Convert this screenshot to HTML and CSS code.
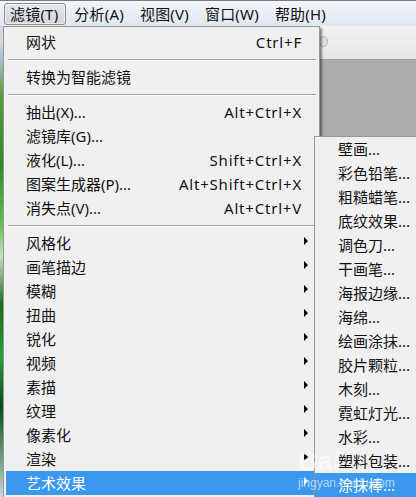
FILE: index.html
```html
<!DOCTYPE html>
<html lang="zh-CN">
<head>
<meta charset="utf-8">
<link rel="stylesheet" href="styles.css">
</head>
<body>
<div class="app">
  <div class="menubar">
    <span class="mb-item active">滤镜(T)</span>
    <span class="mb-item">分析(A)</span>
    <span class="mb-item">视图(V)</span>
    <span class="mb-item">窗口(W)</span>
    <span class="mb-item">帮助(H)</span>
  </div>
  <div class="workspace">
    <div class="photo-strip"></div>
    <div class="right-area">
      <div class="toolbar"><span class="tb-knob"></span></div>
      <div class="canvas"></div>
    </div>
  </div>

  <div class="menu main-menu">
    <div class="item"><span class="label">网状</span><span class="key">Ctrl+F</span></div>
    <div class="sep"></div>
    <div class="item"><span class="label">转换为智能滤镜</span></div>
    <div class="sep"></div>
    <div class="item"><span class="label">抽出(X)...</span><span class="key">Alt+Ctrl+X</span></div>
    <div class="item"><span class="label">滤镜库(G)...</span></div>
    <div class="item"><span class="label">液化(L)...</span><span class="key">Shift+Ctrl+X</span></div>
    <div class="item"><span class="label">图案生成器(P)...</span><span class="key">Alt+Shift+Ctrl+X</span></div>
    <div class="item"><span class="label">消失点(V)...</span><span class="key">Alt+Ctrl+V</span></div>
    <div class="sep"></div>
    <div class="item sub"><span class="label">风格化</span><span class="arrow"></span></div>
    <div class="item sub"><span class="label">画笔描边</span><span class="arrow"></span></div>
    <div class="item sub"><span class="label">模糊</span><span class="arrow"></span></div>
    <div class="item sub"><span class="label">扭曲</span><span class="arrow"></span></div>
    <div class="item sub"><span class="label">锐化</span><span class="arrow"></span></div>
    <div class="item sub"><span class="label">视频</span><span class="arrow"></span></div>
    <div class="item sub"><span class="label">素描</span><span class="arrow"></span></div>
    <div class="item sub"><span class="label">纹理</span><span class="arrow"></span></div>
    <div class="item sub"><span class="label">像素化</span><span class="arrow"></span></div>
    <div class="item sub"><span class="label">渲染</span><span class="arrow"></span></div>
    <div class="item sub hl"><span class="label">艺术效果</span><span class="arrow"></span></div>
  </div>

  <div class="menu sub-menu">
    <div class="item"><span class="label">壁画...</span></div>
    <div class="item"><span class="label">彩色铅笔...</span></div>
    <div class="item"><span class="label">粗糙蜡笔...</span></div>
    <div class="item"><span class="label">底纹效果...</span></div>
    <div class="item"><span class="label">调色刀...</span></div>
    <div class="item"><span class="label">干画笔...</span></div>
    <div class="item"><span class="label">海报边缘...</span></div>
    <div class="item"><span class="label">海绵...</span></div>
    <div class="item"><span class="label">绘画涂抹...</span></div>
    <div class="item"><span class="label">胶片颗粒...</span></div>
    <div class="item"><span class="label">木刻...</span></div>
    <div class="item"><span class="label">霓虹灯光...</span></div>
    <div class="item"><span class="label">水彩...</span></div>
    <div class="item"><span class="label">塑料包装...</span></div>
    <div class="item hl"><span class="label">涂抹棒...</span></div>
  </div>

  <div class="watermark">
    <span class="wm-big">Bai</span>
    <span class="wm-small">jingyan.baidu.com</span>
  </div>
</div>
</body>
</html>
```

FILE: styles.css
```css
* { box-sizing: border-box; }
html, body { margin: 0; padding: 0; }
body {
  font-family: "Noto Sans", "Noto Sans CJK SC", sans-serif;
  font-size: 15px;
  color: #111;
  background: #f0f0f0;
}
.app {
  position: relative;
  width: 416px;
  height: 497px;
  overflow: hidden;
  display: flex;
  flex-direction: column;
}
.menubar {
  height: 26px;
  flex: none;
  display: flex;
  align-items: center;
  padding: 0 0 0 4px;
  border-top: 1px solid #7a7a7a;
  background: linear-gradient(#f3f6fb, #dfe7f2);
}
.mb-item {
  height: 22px;
  line-height: 20px;
  padding: 0 7px 0 5px;
  border: 1px solid transparent;
  white-space: nowrap;
  margin-right: 2px;
  letter-spacing: 0.2px;
}
.mb-item.active {
  border-color: #8a8c8e;
  border-radius: 3px;
  background: linear-gradient(#e4e6e9, #d4d7db);
  box-shadow: inset 0 0 0 1px rgba(255,255,255,0.5);
}
.workspace {
  flex: 1;
  display: flex;
}
.photo-strip {
  width: 4px;
  flex: none;
  background: linear-gradient(#d8d8d8 0, #d8d8d8 14px, #a8c4d8 30px, #5a9a3a 70px, #2e8a2a 140px, #62c050 200px, #c8e0c0 230px, #1a6a1a 280px, #28a038 330px, #0c4a1c 380px, #6a9a7a 430px, #c8d4dc 470px);
}
.right-area {
  flex: 1;
  display: flex;
  flex-direction: column;
}
.toolbar {
  height: 34px;
  flex: none;
  background: linear-gradient(#f2f2f2, #e6e6e6);
  border-bottom: 1px solid #9a9a9a;
  position: relative;
}
.tb-knob {
  position: absolute;
  left: 315px;
  top: 10px;
  width: 9px;
  height: 11px;
  border-radius: 50%;
  border: 1px solid #b8b8b8;
  background: #e0e0e0;
}
.canvas {
  flex: 1;
  background: #ababab;
}

.menu {
  position: absolute;
  background: #f0f0f0;
  border: 1px solid #979797;
  font-family: "Noto Sans", "Noto Sans CJK SC", sans-serif;
  font-size: 15px;
}
.main-menu {
  left: 3px;
  top: 26px;
  width: 317px;
  height: 480px;
  padding: 3px 2px 0 2px;
  box-shadow: 2px 2px 2px rgba(0,0,0,0.45);
}
.sub-menu {
  left: 314px;
  top: 136px;
  width: 120px;
  height: 370px;
  padding: 0 2px 0 0;
  box-shadow: 2px 2px 2px rgba(0,0,0,0.35);
}
.item {
  height: 24px;
  display: flex;
  align-items: center;
  padding: 0 16px 0 20px;
  white-space: nowrap;
  line-height: 24px;
}
.sub-menu .item { padding-left: 23px; }
.label { flex: 1; }
.key { flex: none; letter-spacing: 0.8px; margin-right: -1px; }
.item.sub { padding-right: 9px; }
.arrow {
  width: 0;
  height: 0;
  border-top: 4px solid transparent;
  border-bottom: 4px solid transparent;
  border-left: 4px solid #000;
  margin-top: -4px;
}
.item.hl {
  background: #3a98ee;
  color: #fff;
}
.item.hl .arrow { border-left-color: #fff; }
.sep {
  height: 11px;
  margin: 0 1px 0 2px;
  position: relative;
}
.sep::before {
  content: "";
  position: absolute;
  left: 0; right: 0; top: 5px;
  border-top: 1px solid #a0a0a0;
  border-bottom: 1px solid #ffffff;
}
.watermark {
  position: absolute;
  left: 298px;
  top: 446px;
  display: flex;
  flex-direction: column;
  font-family: "Liberation Sans", sans-serif;
  pointer-events: none;
}
.wm-big {
  font-size: 26px;
  font-weight: bold;
  line-height: 30px;
  letter-spacing: 1px;
  color: rgba(255,255,255,0.6);
}
.wm-small {
  font-size: 12px;
  line-height: 14px;
  color: rgba(255,255,255,0.6);
}
```
